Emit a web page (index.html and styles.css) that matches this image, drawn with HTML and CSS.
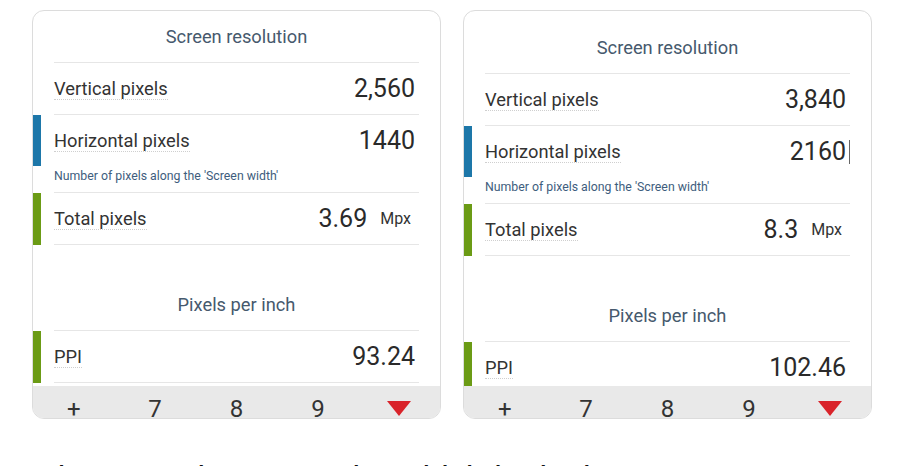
FILE: index.html
```html
<!DOCTYPE html>
<html lang="en">
<head>
    <meta charset="UTF-8">
    <meta name="viewport" content="width=device-width, initial-scale=1.0">
    <title>Screen resolution</title>
    <link rel="stylesheet" href="styles.css">
</head>
<body>
    <div class="cards">
        <section class="calc scrolled">
            <div class="calc-body">
                <div class="sheet">
                    <h2 class="group-title">Screen resolution</h2>
                    <div class="field">
                        <div class="field-main">
                            <div class="field-line">
                                <span class="label">Vertical pixels</span>
                                <span class="value">2,560</span>
                            </div>
                        </div>
                    </div>
                    <div class="field">
                        <div class="field-main input">
                            <div class="field-line no-line">
                                <span class="label">Horizontal pixels</span>
                                <span class="value">1440</span>
                            </div>
                        </div>
                        <p class="hint">Number of pixels along the 'Screen width'</p>
                    </div>
                    <div class="field">
                        <div class="field-main result">
                            <div class="field-line">
                                <span class="label">Total pixels</span>
                                <span class="value">3.69<span class="unit">Mpx</span></span>
                            </div>
                        </div>
                    </div>
                    <h2 class="group-title spaced">Pixels per inch</h2>
                    <div class="field">
                        <div class="field-main result">
                            <div class="field-line">
                                <span class="label">PPI</span>
                                <span class="value">93.24</span>
                            </div>
                        </div>
                    </div>
                </div>
            </div>
            <div class="keypad">
                <span class="key">+</span>
                <span class="key">7</span>
                <span class="key">8</span>
                <span class="key">9</span>
                <span class="key key-down">
                    <svg width="24" height="15" viewBox="0 0 24 15"><path d="M0 0H24L12 15Z" fill="#d9232a"/></svg>
                </span>
            </div>
        </section>

        <section class="calc">
            <div class="calc-body">
                <div class="sheet">
                    <h2 class="group-title">Screen resolution</h2>
                    <div class="field">
                        <div class="field-main">
                            <div class="field-line">
                                <span class="label">Vertical pixels</span>
                                <span class="value">3,840</span>
                            </div>
                        </div>
                    </div>
                    <div class="field">
                        <div class="field-main input">
                            <div class="field-line no-line">
                                <span class="label">Horizontal pixels</span>
                                <span class="value">2160<span class="caret"></span></span>
                            </div>
                        </div>
                        <p class="hint">Number of pixels along the 'Screen width'</p>
                    </div>
                    <div class="field">
                        <div class="field-main result">
                            <div class="field-line">
                                <span class="label">Total pixels</span>
                                <span class="value">8.3<span class="unit">Mpx</span></span>
                            </div>
                        </div>
                    </div>
                    <h2 class="group-title spaced">Pixels per inch</h2>
                    <div class="field">
                        <div class="field-main result">
                            <div class="field-line">
                                <span class="label">PPI</span>
                                <span class="value">102.46</span>
                            </div>
                        </div>
                    </div>
                </div>
            </div>
            <div class="keypad">
                <span class="key">+</span>
                <span class="key">7</span>
                <span class="key">8</span>
                <span class="key">9</span>
                <span class="key key-down">
                    <svg width="24" height="15" viewBox="0 0 24 15"><path d="M0 0H24L12 15Z" fill="#d9232a"/></svg>
                </span>
            </div>
        </section>
    </div>

    <p class="question">Please rank screens by which looks best</p>
</body>
</html>
```

FILE: styles.css
```css
* {
    margin: 0;
    padding: 0;
    box-sizing: border-box;
}

body {
    font-family: Roboto, "Noto Sans", sans-serif;
    background: #fff;
    padding: 10px 0 0 32px;
    overflow: hidden;
}

.cards {
    display: flex;
    gap: 22px;
}

.calc {
    width: 409px;
    height: 409px;
    border: 1px solid #dcdcdc;
    border-radius: 12px;
    overflow: hidden;
    display: flex;
    flex-direction: column;
}

.calc-body {
    flex: 1;
    overflow: hidden;
    padding-top: 11px;
}

/* first card is scrolled up a little */
.scrolled .sheet {
    margin-top: -11px;
}

.group-title {
    margin: 0 21px;
    padding: 15px 0;
    font-size: 18.3px;
    line-height: 21px;
    font-weight: 400;
    text-align: center;
    color: #46596d;
    border-bottom: 1px solid #e6e6e6;
}

.group-title.spaced {
    margin-top: 34px;
}

.field {
    padding-right: 21px;
}

.field-main {
    display: flex;
    border-left: 8px solid transparent;
    padding-left: 13px;
}

.field-main.input {
    border-left-color: #1d77a9;
}

.field-main.result {
    border-left-color: #6b9b15;
}

.field-line {
    flex: 1;
    height: 52px;
    display: flex;
    align-items: center;
    justify-content: space-between;
    padding-right: 4px;
    border-bottom: 1px solid #e6e6e6;
}

.field-line.no-line {
    border-bottom: none;
    height: 51px;
}

.label {
    font-size: 18.3px;
    line-height: 21px;
    color: #333;
    border-bottom: 1px dotted #cfcfcf;
}

.value {
    font-size: 25px;
    line-height: 28px;
    color: #2a2a2a;
    display: flex;
    align-items: center;
}

.unit {
    font-size: 16px;
    margin: 0 4px 0 13px;
    color: #333;
}

.caret {
    display: inline-block;
    width: 1px;
    height: 24px;
    background: #666;
    margin-left: 3px;
    margin-right: -4px;
}

.hint {
    margin-left: 21px;
    padding: 3px 0 9px;
    font-size: 12.3px;
    line-height: 14px;
    color: #3e5d7d;
    border-bottom: 1px solid #e6e6e6;
}

.keypad {
    flex: none;
    height: 32px;
    background: #e9e9e9;
    display: grid;
    grid-template-columns: repeat(5, 1fr);
}

.key {
    text-align: center;
    font-size: 24px;
    line-height: 28px;
    padding-top: 9px;
    color: #333;
}

.key-down svg {
    display: block;
    margin: 6px auto 0;
}

.question {
    margin: 39px 0 0 3px;
    font-family: "Liberation Sans", Arial, sans-serif;
    font-size: 34px;
    color: #111;
    white-space: nowrap;
}
```
